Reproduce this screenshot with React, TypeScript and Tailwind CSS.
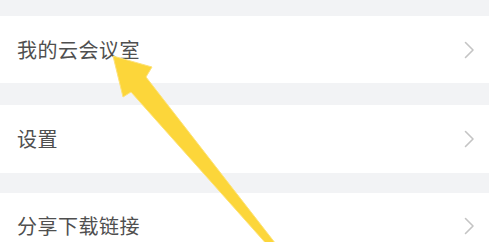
import React from 'react';

const items = ['我的云会议室', '设置', '分享下载链接'];

function Chevron() {
  return (
    <svg width="12" height="18" viewBox="0 0 12 18" className="shrink-0">
      <path d="M2.5 1.5 L10 9 L2.5 16.5" fill="none" stroke="#c4c4c4" strokeWidth="1.6" strokeLinecap="round" strokeLinejoin="round" />
    </svg>
  );
}

function Row({ label, className = '' }: { label: string; className?: string }) {
  return (
    <div className={`flex items-center justify-between bg-white pl-[17px] pr-[14px] ${className}`}>
      <span className="text-[20px] leading-none tracking-[0.5px] text-[#4f4f4f]">{label}</span>
      <Chevron />
    </div>
  );
}

export default function App() {
  return (
    <div
      className="relative w-[489px] h-[242px] overflow-hidden bg-[#f2f3f5]"
      style={{ fontFamily: '"Noto Sans CJK SC", "Noto Sans", sans-serif' }}
    >
      <div className="flex flex-col pt-[16px]">
        <Row label={items[0]} className="h-[67px]" />
        <div className="h-[22px]" />
        <Row label={items[1]} className="h-[68px]" />
        <div className="h-[20px]" />
        <Row label={items[2]} className="h-[66px]" />
      </div>

      {/* pointer arrow over the list */}
      <svg className="absolute inset-0 pointer-events-none" width="489" height="242" viewBox="0 0 489 242">
        <path
          d="M113 56 L152 67 L146 77 L279 248 L270 248 L131 92 L123 97 Z"
          fill="#fcd63a"
          stroke="#fde27a"
          strokeWidth="1"
          strokeLinejoin="round"
        />
      </svg>
    </div>
  );
}
